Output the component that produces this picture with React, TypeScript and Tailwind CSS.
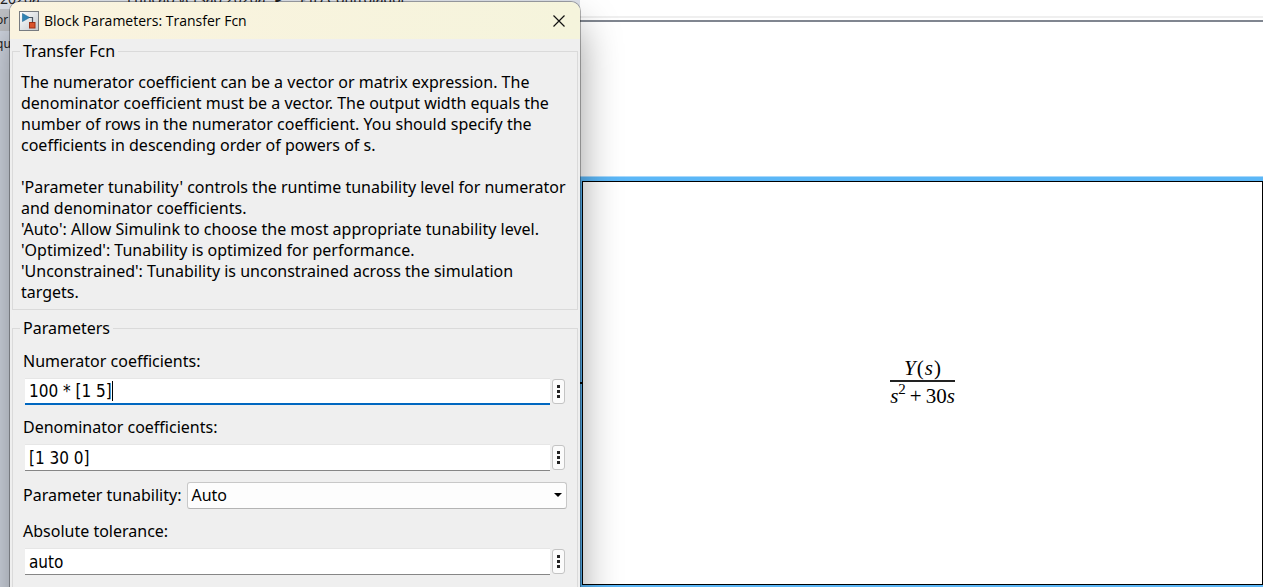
import type { ReactNode } from "react";

function BlockIcon() {
  return (
    <svg width="20" height="20" viewBox="0 0 20 20" className="shrink-0" aria-hidden="true">
      <defs>
        <linearGradient id="tile" x1="0" y1="0" x2="1" y2="1">
          <stop offset="0" stopColor="#ffffff" />
          <stop offset="1" stopColor="#c3c8cd" />
        </linearGradient>
      </defs>
      <rect x="0.5" y="0.5" width="19" height="19" fill="url(#tile)" stroke="#777b80" />
      <path d="M9 6.5H13.5V12" fill="none" stroke="#4a5560" strokeWidth="1.2" />
      <path d="M3.5 2.5L10.5 6.5L3.5 10.5Z" fill="#2f83b4" stroke="#1e6592" strokeWidth="0.6" />
      <rect x="10.5" y="11.5" width="5.5" height="5.5" fill="#d9532c" stroke="#9c2f14" />
    </svg>
  );
}

function MoreButton({ label }: { label: string }) {
  return (
    <button
      type="button"
      aria-label={label}
      className="flex h-[25px] w-[13px] shrink-0 flex-col items-center justify-center gap-[2px] rounded-[3px] border border-[#c4c4c4] bg-[#fbfbfb]"
    >
      <span className="size-[3px] bg-[#222]" />
      <span className="size-[3px] bg-[#222]" />
      <span className="size-[3px] bg-[#222]" />
    </button>
  );
}

function Group({ title, children }: { title: string; children: ReactNode }) {
  return (
    <fieldset className="min-w-0 border border-[#dadada]">
      <legend className="ml-[7px] px-[3px] leading-[21px]">{title}</legend>
      {children}
    </fieldset>
  );
}

function Field({
  id,
  label,
  value,
  focused = false,
}: {
  id: string;
  label: string;
  value: string;
  focused?: boolean;
}) {
  return (
    <div className="flex flex-col gap-[6px]">
      <label htmlFor={id} className="self-start">
        {label}
      </label>
      <div className="flex items-center gap-[2px] pr-3 pl-[2px] font-['DejaVu_Sans_Condensed','DejaVu_Sans',sans-serif] text-[17px]">
        {focused ? (
          <label
            htmlFor={id}
            className="flex h-[27px] grow items-center border-t border-b-2 border-t-[#e6e6e6] border-b-[#0067c0] bg-white pl-1"
          >
            <input id={id} defaultValue={value} className="field-sizing-content caret-transparent outline-none" />
            <span className="h-5 w-px bg-black" />
          </label>
        ) : (
          <input
            id={id}
            defaultValue={value}
            className="h-[27px] w-0 grow border-t border-b border-t-[#e6e6e6] border-b-[#868686] bg-white pl-1 outline-none"
          />
        )}
        <MoreButton label={`${label} options`} />
      </div>
    </div>
  );
}

function Dialog() {
  return (
    <section
      role="dialog"
      aria-labelledby="dialog-title"
      className="absolute top-[2px] left-[10px] h-[130%] w-[570px] overflow-hidden rounded-[9px] bg-[#efefef] shadow-[0_0_0_1px_rgba(0,0,0,0.3),0_24px_40px_rgba(0,0,0,0.4)]"
    >
      <header className="flex h-[37px] items-center gap-[5px] bg-linear-to-r from-[#faf3df] to-[#f5f4dc] pl-[9px]">
        <BlockIcon />
        <h1 id="dialog-title" className="grow font-['Open_Sans',sans-serif] text-sm">
          Block Parameters: Transfer Fcn
        </h1>
        <button type="button" aria-label="Close" className="flex h-full w-[42px] items-center justify-center">
          <svg width="12" height="12" viewBox="0 0 12 12" aria-hidden="true">
            <path d="M0.5 0.5L11.5 11.5M11.5 0.5L0.5 11.5" stroke="#111" strokeWidth="1.2" />
          </svg>
        </button>
      </header>

      <div className="flex flex-col gap-2 px-[2px] pt-[2px]">
        <Group title="Transfer Fcn">
          <div className="px-2 pt-[10px] pb-[6px]">
            <p>
              The numerator coefficient can be a vector or matrix expression. The
              <br />
              denominator coefficient must be a vector. The output width equals the
              <br />
              number of rows in the numerator coefficient. You should specify the
              <br />
              coefficients in descending order of powers of s.
            </p>
            <p className="mt-[21px]">
              'Parameter tunability' controls the runtime tunability level for numerator
              <br />
              and denominator coefficients.
              <br />
              'Auto': Allow Simulink to choose the most appropriate tunability level.
              <br />
              'Optimized': Tunability is optimized for performance.
              <br />
              'Unconstrained': Tunability is unconstrained across the simulation
              <br />
              targets.
            </p>
          </div>
        </Group>

        <Group title="Parameters">
          <form className="flex flex-col gap-3 pt-3 pb-20 pl-[10px]">
            <Field id="numerator" label="Numerator coefficients:" value="100 * [1 5]" focused />
            <Field id="denominator" label="Denominator coefficients:" value="[1 30 0]" />
            <div className="-mt-px flex items-center gap-[6px] pr-[10px]">
              <label htmlFor="tunability">Parameter tunability:</label>
              <div className="relative flex grow">
                <select
                  id="tunability"
                  defaultValue="Auto"
                  className="h-[27px] w-full appearance-none rounded-[3px] border border-[#c8c8c8] border-b-[#b4b4b4] bg-[#fdfdfd] pl-[3px]"
                >
                  <option>Auto</option>
                  <option>Optimized</option>
                  <option>Unconstrained</option>
                </select>
                <svg
                  width="8"
                  height="4"
                  viewBox="0 0 8 4"
                  className="pointer-events-none absolute top-[11px] right-[5px]"
                  aria-hidden="true"
                >
                  <path d="M0 0H8L4 4Z" fill="#000" />
                </svg>
              </div>
            </div>
            <Field id="tolerance" label="Absolute tolerance:" value="auto" />
          </form>
        </Group>
      </div>
    </section>
  );
}

function Backdrop() {
  return (
    <div className="flex w-[580px] shrink-0 flex-col bg-[#d3d9e4] text-[12px] leading-[18px] text-[#222]">
      <div className="flex h-[9px] items-end overflow-hidden bg-[#dde1e9] pb-[1px] text-[14px] whitespace-nowrap">
        <span className="w-[127px] shrink-0">2020a</span>
        <span className="w-[146px] shrink-0">Função versão 2020a</span>
        <span className="w-[27px] shrink-0 text-[12px]">►</span>
        <span>PID Controlador</span>
      </div>
      <div className="-ml-1 flex h-[22px] items-center bg-[#c0c2c6]">or</div>
      <div className="-ml-1 flex h-[26px] items-center">qu</div>
    </div>
  );
}

function Canvas() {
  return (
    <div className="flex min-w-0 grow flex-col bg-white">
      <div className="h-4 shrink-0" />
      <div className="h-[2px] shrink-0 bg-[#efefef]" />
      <div className="mt-[2px] h-[2px] shrink-0 bg-[#808690]" />
      <div className="relative mt-[154px] flex grow flex-col border-t border-t-[#a8d8fb] bg-[#5bb7f7] pt-1 pb-[2px] pl-[2px]">
        <span className="absolute top-1/2 left-0 h-[2px] w-[3px] bg-black" />
        <div className="flex grow items-center justify-center border border-black bg-white pb-[3px] font-['Liberation_Serif',serif] text-[21px] leading-6 text-black">
          <div className="flex flex-col items-center">
            <div>
              <i>Y</i>
              <span className="mx-px">(</span>
              <i>s</i>
              <span className="ml-px">)</span>
            </div>
            <div className="h-[2px] w-full bg-[#222]" />
            <div className="flex pt-[2px]">
              <i>s</i>
              <sup className="top-0 -mt-[7px] text-[15px] leading-6">2</sup>
              <span className="mx-1">+</span>
              <span>
                30<i>s</i>
              </span>
            </div>
          </div>
        </div>
      </div>
    </div>
  );
}

export default function App() {
  return (
    <main className="relative flex h-screen overflow-hidden bg-white font-['Noto_Sans',sans-serif] text-[16px] leading-[21px] text-black">
      <Backdrop />
      <Canvas />
      <Dialog />
    </main>
  );
}
